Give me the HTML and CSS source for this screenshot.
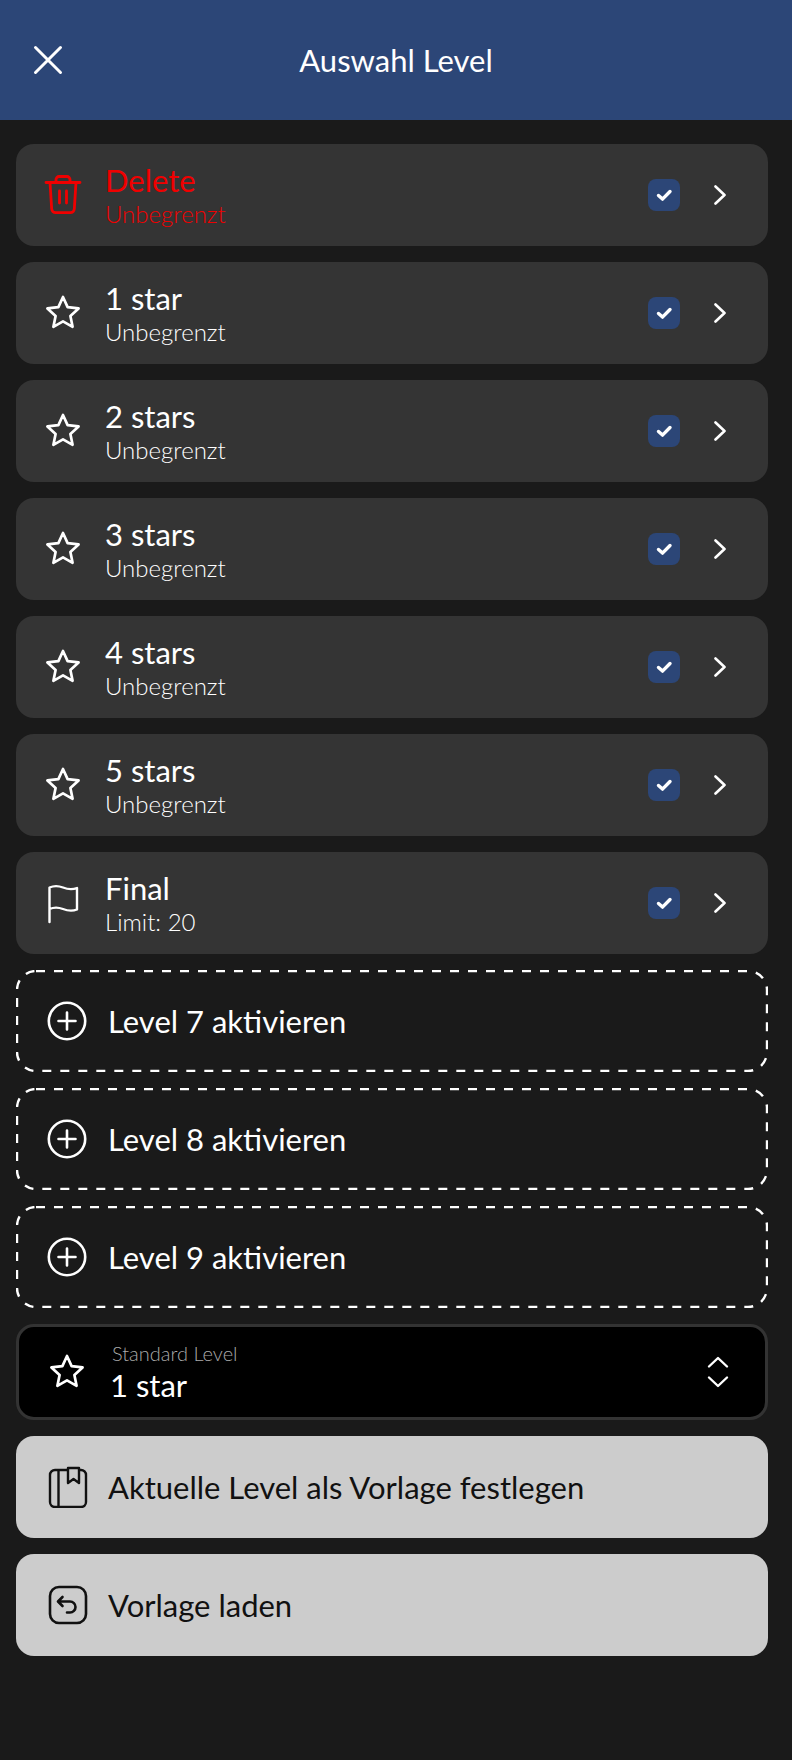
FILE: index.html
```html
<!DOCTYPE html>
<html lang="de">

<head>
    <meta charset="UTF-8">
    <title>Auswahl Level</title>
    <link rel="stylesheet" href="styles.css">
</head>

<body>
    <!-- shared icons -->
    <svg class="icon-defs" xmlns="http://www.w3.org/2000/svg">
        <symbol id="i-star" viewBox="0 0 38 38">
            <path d="M19 3l4.6 10.1 11 1.3-8.2 7.5 2.2 10.9L19 27.3l-9.6 5.5 2.2-10.9-8.2-7.5 11-1.3z" fill="none" stroke="currentColor" stroke-width="2.7" stroke-linejoin="round" />
        </symbol>
        <symbol id="i-chevron" viewBox="0 0 12 20">
            <path d="M1.5 1.5l9 8.5-9 8.5" fill="none" stroke="currentColor" stroke-width="2.6" stroke-linecap="round" stroke-linejoin="round" />
        </symbol>
        <symbol id="i-check" viewBox="0 0 32 32">
            <path d="M10.5 16.5l4 3.6 7.5-7.6" fill="none" stroke="#fff" stroke-width="3.4" stroke-linecap="round" stroke-linejoin="round" />
        </symbol>
        <symbol id="i-plus" viewBox="0 0 40 40">
            <circle cx="20" cy="20" r="18.2" fill="none" stroke="currentColor" stroke-width="2.6" />
            <path d="M20 11.5v17M11.5 20h17" fill="none" stroke="currentColor" stroke-width="2.6" stroke-linecap="round" />
        </symbol>
    </svg>

    <header class="top-bar">
        <button class="close-btn">
            <svg width="30" height="30" viewBox="0 0 30 30">
                <path d="M2.5 2.5l25 25M27.5 2.5l-25 25" fill="none" stroke="#fff" stroke-width="3" stroke-linecap="round" />
            </svg>
        </button>
        <h1>Auswahl Level</h1>
    </header>

    <main class="level-list">
        <div class="level-card level-delete">
            <svg class="level-icon" width="38" height="42" viewBox="0 0 38 42">
                <path d="M2 8.5h34M6 8.5l1.7 26.5a4 4 0 0 0 4 3.7h14.6a4 4 0 0 0 4-3.7L32 8.5M12 8V5.5A3 3 0 0 1 15 2.500h8a3 3 0 0 1 3 3V8M15.500 17v12M22.500 17v12" fill="none" stroke="currentColor" stroke-width="2.8" stroke-linecap="round" stroke-linejoin="round" />
            </svg>
            <div class="level-text">
                <div class="level-name">Delete</div>
                <div class="level-limit">Unbegrenzt</div>
            </div>
            <span class="check-box"><svg width="32" height="32"><use href="#i-check" /></svg></span>
            <svg class="chevron" width="12" height="20"><use href="#i-chevron" /></svg>
        </div>

        <div class="level-card">
            <svg class="level-icon" width="38" height="38"><use href="#i-star" /></svg>
            <div class="level-text">
                <div class="level-name">1 star</div>
                <div class="level-limit">Unbegrenzt</div>
            </div>
            <span class="check-box"><svg width="32" height="32"><use href="#i-check" /></svg></span>
            <svg class="chevron" width="12" height="20"><use href="#i-chevron" /></svg>
        </div>

        <div class="level-card">
            <svg class="level-icon" width="38" height="38"><use href="#i-star" /></svg>
            <div class="level-text">
                <div class="level-name">2 stars</div>
                <div class="level-limit">Unbegrenzt</div>
            </div>
            <span class="check-box"><svg width="32" height="32"><use href="#i-check" /></svg></span>
            <svg class="chevron" width="12" height="20"><use href="#i-chevron" /></svg>
        </div>

        <div class="level-card">
            <svg class="level-icon" width="38" height="38"><use href="#i-star" /></svg>
            <div class="level-text">
                <div class="level-name">3 stars</div>
                <div class="level-limit">Unbegrenzt</div>
            </div>
            <span class="check-box"><svg width="32" height="32"><use href="#i-check" /></svg></span>
            <svg class="chevron" width="12" height="20"><use href="#i-chevron" /></svg>
        </div>

        <div class="level-card">
            <svg class="level-icon" width="38" height="38"><use href="#i-star" /></svg>
            <div class="level-text">
                <div class="level-name">4 stars</div>
                <div class="level-limit">Unbegrenzt</div>
            </div>
            <span class="check-box"><svg width="32" height="32"><use href="#i-check" /></svg></span>
            <svg class="chevron" width="12" height="20"><use href="#i-chevron" /></svg>
        </div>

        <div class="level-card">
            <svg class="level-icon" width="38" height="38"><use href="#i-star" /></svg>
            <div class="level-text">
                <div class="level-name">5 stars</div>
                <div class="level-limit">Unbegrenzt</div>
            </div>
            <span class="check-box"><svg width="32" height="32"><use href="#i-check" /></svg></span>
            <svg class="chevron" width="12" height="20"><use href="#i-chevron" /></svg>
        </div>

        <div class="level-card">
            <svg class="level-icon" width="38" height="42" viewBox="0 0 38 42">
                <path d="M5.500 40V5.500C10 3.500 14 3.500 19 5.500s9 2.500 14 .5v21.500c-5 2-9 1.500-14-.5s-9-2-13.500 0" fill="none" stroke="currentColor" stroke-width="2.4" stroke-linecap="round" stroke-linejoin="round" />
            </svg>
            <div class="level-text">
                <div class="level-name">Final</div>
                <div class="level-limit">Limit: 20</div>
            </div>
            <span class="check-box"><svg width="32" height="32"><use href="#i-check" /></svg></span>
            <svg class="chevron" width="12" height="20"><use href="#i-chevron" /></svg>
        </div>

        <div class="add-card">
            <svg class="dash-frame"><rect x="1" y="1" width="750" height="100" rx="19" /></svg>
            <svg width="40" height="40"><use href="#i-plus" /></svg>
            <span>Level 7 aktivieren</span>
        </div>

        <div class="add-card">
            <svg class="dash-frame"><rect x="1" y="1" width="750" height="100" rx="19" /></svg>
            <svg width="40" height="40"><use href="#i-plus" /></svg>
            <span>Level 8 aktivieren</span>
        </div>

        <div class="add-card">
            <svg class="dash-frame"><rect x="1" y="1" width="750" height="100" rx="19" /></svg>
            <svg width="40" height="40"><use href="#i-plus" /></svg>
            <span>Level 9 aktivieren</span>
        </div>

        <div class="default-select">
            <svg width="38" height="38"><use href="#i-star" /></svg>
            <div class="select-text">
                <div class="select-label">Standard Level</div>
                <div class="select-value">1 star</div>
            </div>
            <svg class="select-arrows" width="22" height="32" viewBox="0 0 22 32">
                <path d="M2 10.500L11 2l9 8.500M2 21.500l9 8.500 9-8.500" fill="none" stroke="#fff" stroke-width="2.4" stroke-linecap="round" stroke-linejoin="round" />
            </svg>
        </div>

        <button class="action-btn">
            <svg width="40" height="42" viewBox="0 0 40 42">
                <path d="M19 4H7a5 5 0 0 0-5 5v27a5 5 0 0 0 5 5h26a5 5 0 0 0 5-5V9a5 5 0 0 0-5-5h-1M10.500 4v37M20 2h11v15l-5.500-4-5.500 4z" fill="none" stroke="currentColor" stroke-width="2.400" stroke-linecap="round" stroke-linejoin="round" />
            </svg>
            <span>Aktuelle Level als Vorlage festlegen</span>
        </button>

        <button class="action-btn">
            <svg width="40" height="40" viewBox="0 0 40 40">
                <rect x="2" y="2" width="36" height="36" rx="9" fill="none" stroke="currentColor" stroke-width="2.600" />
                <path d="M14.500 12l-4.500 4.500 4.500 4.500M10.500 16.500h11.500a5.500 5.500 0 0 1 0 11h-3" fill="none" stroke="currentColor" stroke-width="2.600" stroke-linecap="round" stroke-linejoin="round" />
            </svg>
            <span>Vorlage laden</span>
        </button>
    </main>
</body>

</html>
```

FILE: styles.css
```css
body {
    font-family: "Lato", "Noto Sans", sans-serif;
    margin: 0;
    background-color: #1a1a1a;
    color: white;
}

.icon-defs {
    display: none;
}

.top-bar {
    display: flex;
    align-items: center;
    justify-content: center;
    position: relative;
    height: 120px;
    padding-left: 0;
    box-sizing: border-box;
    background-color: #2c4677;
}

.top-bar h1 {
    margin: 0 0 0 0;
    font-size: 31px;
    font-weight: 400;
}

.close-btn {
    position: absolute;
    left: 33px;
    top: 45px;
    display: flex;
    padding: 0;
    border: none;
    background: none;
}

.level-list {
    display: flex;
    flex-direction: column;
    gap: 16px;
    padding: 24px 24px 0 16px;
}

.level-card {
    display: flex;
    align-items: center;
    height: 102px;
    padding: 0 42px 0 28px;
    border-radius: 18px;
    background-color: #343434;
}

.level-delete {
    color: #f00000;
}

.level-icon {
    flex: none;
    margin-right: 23px;
}

.level-text {
    flex: 1;
}

.level-name {
    font-size: 31px;
    line-height: 38px;
}

.level-limit {
    font-size: 24px;
    font-weight: 300;
    line-height: 30px;
}

.check-box {
    display: block;
    width: 32px;
    height: 32px;
    margin-right: 34px;
    border-radius: 8px;
    background-color: #2c4677;
}

.chevron {
    color: white;
}

.add-card {
    display: flex;
    align-items: center;
    gap: 21px;
    position: relative;
    height: 102px;
    padding-left: 31px;
    font-size: 31px;
}

.dash-frame {
    position: absolute;
    left: 0;
    top: 0;
    width: 100%;
    height: 100%;
}

.dash-frame rect {
    fill: none;
    stroke: white;
    stroke-width: 2.4;
    stroke-dasharray: 9 9;
}

.default-select {
    display: flex;
    align-items: center;
    height: 96px;
    padding: 0 36px 0 29px;
    box-sizing: border-box;
    border: 3px solid #333;
    border-radius: 18px;
    background-color: black;
}

.select-text {
    flex: 1;
    margin-left: 24px;
}

.select-label {
    margin-left: 2px;
    font-size: 20px;
    font-weight: 300;
    line-height: 26px;
    color: #aaa;
}

.select-value {
    font-size: 31px;
    line-height: 38px;
}

.action-btn {
    display: flex;
    align-items: center;
    gap: 20px;
    height: 102px;
    padding: 0 0 0 32px;
    border: none;
    border-radius: 18px;
    background-color: #ccc;
    color: #111;
    font-family: inherit;
    font-size: 31px;
    text-align: left;
}
```
